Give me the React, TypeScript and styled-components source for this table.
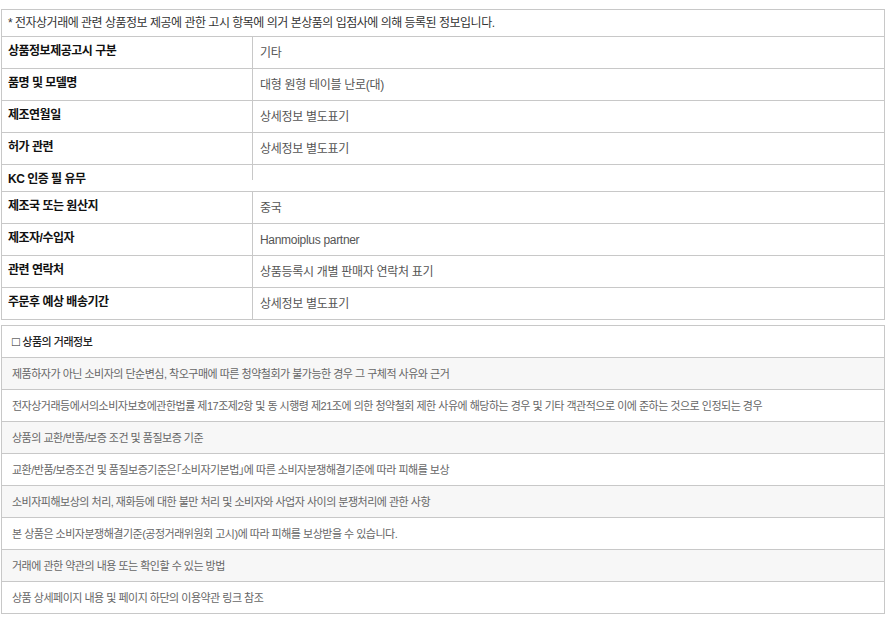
import styled, { createGlobalStyle } from 'styled-components'

const GlobalStyle = createGlobalStyle`
    body {
        margin: 0;
        background: #fff;
        font-family: "Liberation Sans", "Noto Sans CJK KR", sans-serif;
    }
`

const Page = styled.div`
    padding: 9px 2px 0 1px;
`

const InfoBox = styled.div`
    border: 1px solid #c8c8c8;
`

const Notice = styled.div`
    padding: 5px 6px;
    border-bottom: 1px solid #c8c8c8;
    font-size: 12px;
    line-height: 16px;
    letter-spacing: -0.5px;
    color: #333;
`

const InfoRow = styled.div`
    display: flex;
    align-items: flex-start;
    & + & {
        border-top: 1px solid #c8c8c8;
    }
`

const Label = styled.div`
    width: 250px;
    flex: none;
    box-sizing: border-box;
    padding: 6px 6px 4px;
    font-size: 12px;
    line-height: 16px;
    letter-spacing: -0.5px;
    font-weight: bold;
    color: #111;
`

const Value = styled.div`
    flex: 1;
    padding: 8px 7px 7px;
    border-left: 1px solid #c8c8c8;
    font-size: 12px;
    line-height: 16px;
    letter-spacing: -0.3px;
    color: #555;
`

const TradeBox = styled.div`
    margin-top: 5px;
    border: 1px solid #c8c8c8;
`

const TradeRow = styled.div<{ $shade?: boolean; $head?: boolean }>`
    padding: 8px 10px 7px;
    font-size: 11px;
    line-height: 16px;
    letter-spacing: -0.5px;
    font-feature-settings: "halt";
    color: ${p => (p.$head ? '#222' : '#666')};
    font-weight: ${p => (p.$head ? 500 : 'normal')};
    background: ${p => (p.$shade ? '#f7f7f7' : '#fff')};
    & + & {
        border-top: 1px solid #c8c8c8;
    }
`

const Box = styled.span`
    font-size: 13px;
    line-height: 16px;
    font-weight: bold;
    margin-right: 3px;
`

const infoRows = [
    { label: '상품정보제공고시 구분', value: '기타' },
    { label: '품명 및 모델명', value: '대형 원형 테이블 난로(대)' },
    { label: '제조연월일', value: '상세정보 별도표기' },
    { label: '허가 관련', value: '상세정보 별도표기' },
    { label: 'KC 인증 필 유무', value: '' },
    { label: '제조국 또는 원산지', value: '중국' },
    { label: '제조자/수입자', value: 'Hanmoiplus partner' },
    { label: '관련 연락처', value: '상품등록시 개별 판매자 연락처 표기' },
    { label: '주문후 예상 배송기간', value: '상세정보 별도표기' },
]

const tradeRows = [
    '제품하자가 아닌 소비자의 단순변심, 착오구매에 따른 청약철회가 불가능한 경우 그 구체적 사유와 근거',
    '전자상거래등에서의소비자보호에관한법률 제17조제2항 및 동 시행령 제21조에 의한 청약철회 제한 사유에 해당하는 경우 및 기타 객관적으로 이에 준하는 것으로 인정되는 경우',
    '상품의 교환/반품/보증 조건 및 품질보증 기준',
    '교환/반품/보증조건 및 품질보증기준은「소비자기본법」에 따른 소비자분쟁해결기준에 따라 피해를 보상',
    '소비자피해보상의 처리, 재화등에 대한 불만 처리 및 소비자와 사업자 사이의 분쟁처리에 관한 사항',
    '본 상품은 소비자분쟁해결기준(공정거래위원회 고시)에 따라 피해를 보상받을 수 있습니다.',
    '거래에 관한 약관의 내용 또는 확인할 수 있는 방법',
    '상품 상세페이지 내용 및 페이지 하단의 이용약관 링크 참조',
]

const App = () => {
    return (
        <Page>
            <GlobalStyle />
            <InfoBox>
                <Notice>* 전자상거래에 관련 상품정보 제공에 관한 고시 항목에 의거 본상품의 입점사에 의해 등록된 정보입니다.</Notice>
                {infoRows.map(row => (
                    <InfoRow key={row.label}>
                        <Label>{row.label}</Label>
                        <Value>{row.value}</Value>
                    </InfoRow>
                ))}
            </InfoBox>
            <TradeBox>
                <TradeRow $head><Box>□</Box>상품의 거래정보</TradeRow>
                {tradeRows.map((text, i) => (
                    <TradeRow key={i} $shade={i % 2 === 0}>{text}</TradeRow>
                ))}
            </TradeBox>
        </Page>
    )
}

export default App
